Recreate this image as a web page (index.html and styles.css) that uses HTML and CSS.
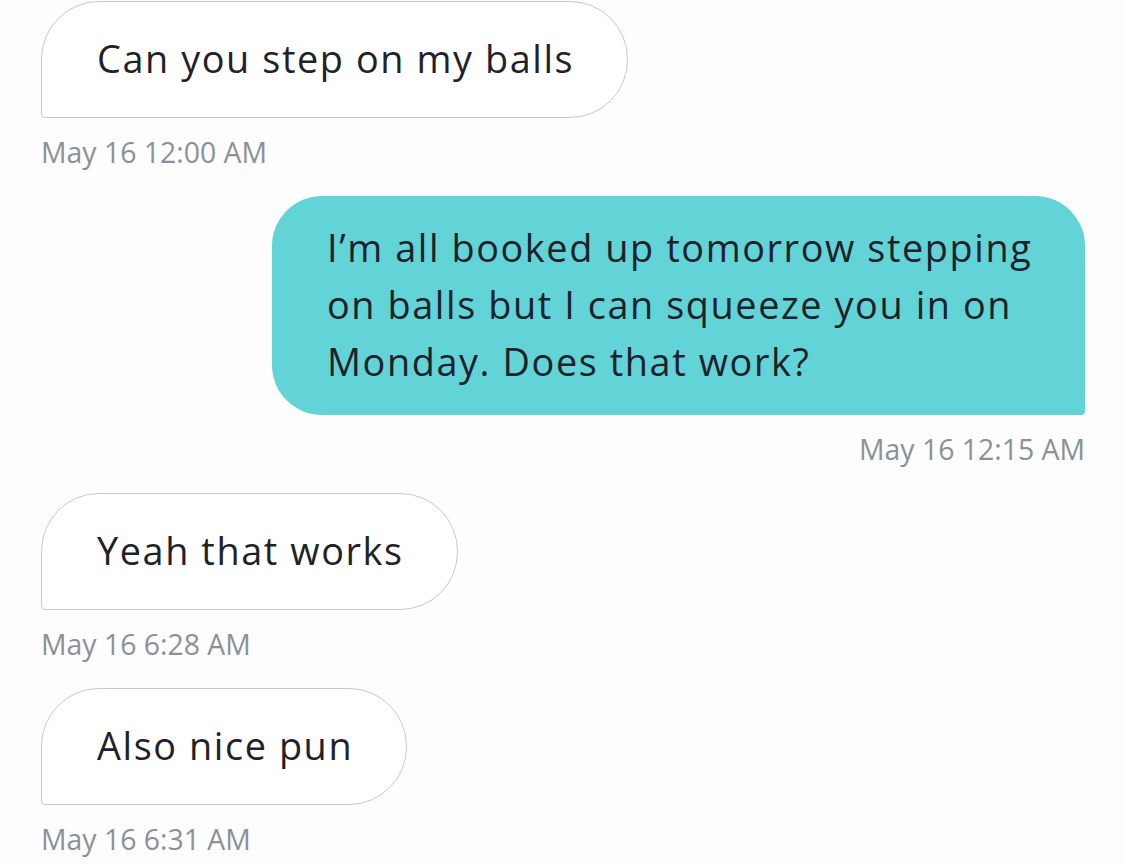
FILE: index.html
```html
<!DOCTYPE html>
<html lang="en">
<head>
<meta charset="utf-8">
<title>Chat</title>
<link rel="stylesheet" href="styles.css">
</head>
<body>
<main class="thread">
  <div class="msg msg-in">
    <div class="bubble bubble-in">Can you step on my balls</div>
    <div class="stamp">May 16 12:00 AM</div>
  </div>
  <div class="msg msg-out">
    <div class="bubble bubble-out">I’m all booked up tomorrow stepping on balls but I can squeeze you in on Monday. Does that work?</div>
    <div class="stamp">May 16 12:15 AM</div>
  </div>
  <div class="msg msg-in">
    <div class="bubble bubble-in">Yeah that works</div>
    <div class="stamp">May 16 6:28 AM</div>
  </div>
  <div class="msg msg-in">
    <div class="bubble bubble-in">Also nice pun</div>
    <div class="stamp">May 16 6:31 AM</div>
  </div>
</main>
</body>
</html>
```
FILE: styles.css
```css
html, body {
  margin: 0;
  padding: 0;
  background: #fdfdfd;
}
body {
  font-family: "Open Sans", "Noto Sans", sans-serif;
  color: #1f2229;
}
.thread {
  display: flex;
  flex-direction: column;
  padding: 1px 40px 0 41px;
  gap: 24px;
}
.msg {
  display: flex;
  flex-direction: column;
}
.msg-in { align-items: flex-start; }
.msg-out { align-items: flex-end; }
.bubble {
  font-size: 37.8px;
  letter-spacing: 1.6px;
  line-height: 57px;
  box-sizing: border-box;
}
.bubble-in {
  background: #ffffff;
  border: 1.5px solid #c5c9d1;
  border-radius: 58px 58px 58px 4px;
  padding: 28px 53px 30px 55px;
}
.bubble-out {
  background: #62d4d7;
  border-radius: 50px 50px 4px 50px;
  width: 813px;
  padding: 23px 40px 25px 55px;
}
.stamp {
  font-size: 28.4px;
  line-height: 40px;
  color: #8c9099;
  margin-top: 14px;
}
```
